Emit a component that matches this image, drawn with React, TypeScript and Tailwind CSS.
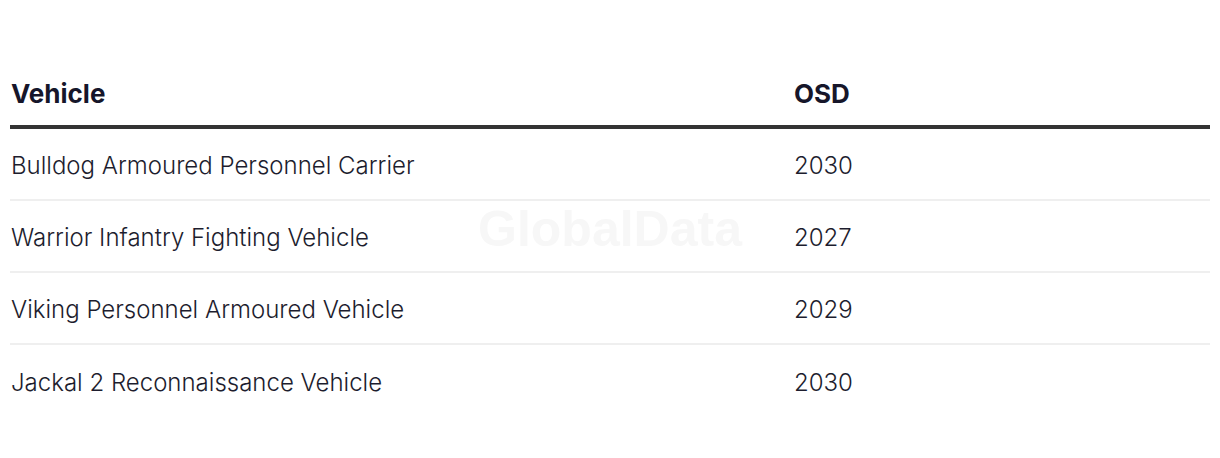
import React from "react";

const rows = [
  ["Bulldog Armoured Personnel Carrier", "2030"],
  ["Warrior Infantry Fighting Vehicle", "2027"],
  ["Viking Personnel Armoured Vehicle", "2029"],
  ["Jackal 2 Reconnaissance Vehicle", "2030"],
];

export default function App() {
  return (
    <div className="w-[1220px] h-[458px] bg-white pt-[59px] px-[10px]" style={{ fontFamily: "Inter, 'Noto Sans', sans-serif" }}>
      <div className="relative">
        <div className="flex h-[70px] items-center border-b-4 border-[#333333] pt-[2px] text-[26px] font-bold text-[#16162a]">
          <div className="w-[784px] pl-px">Vehicle</div>
          <div>OSD</div>
        </div>
        {rows.map((r, i) => (
          <div
            key={i}
            className={`flex h-[72px] items-center pt-1 text-[24px] font-light text-[#1d1d2e] ${i < rows.length - 1 ? "border-b-2 border-[#efefef]" : ""}`}
          >
            <div className="w-[784px] pl-px">{r[0]}</div>
            <div>{r[1]}</div>
          </div>
        ))}
        <div className="pointer-events-none absolute left-0 right-0 top-[133px] flex justify-center">
          <span className="text-[50px] font-bold text-[#f7f7f7]" style={{ fontFamily: "'Liberation Sans', Arial, sans-serif" }}>GlobalData</span>
        </div>
      </div>
    </div>
  );
}
